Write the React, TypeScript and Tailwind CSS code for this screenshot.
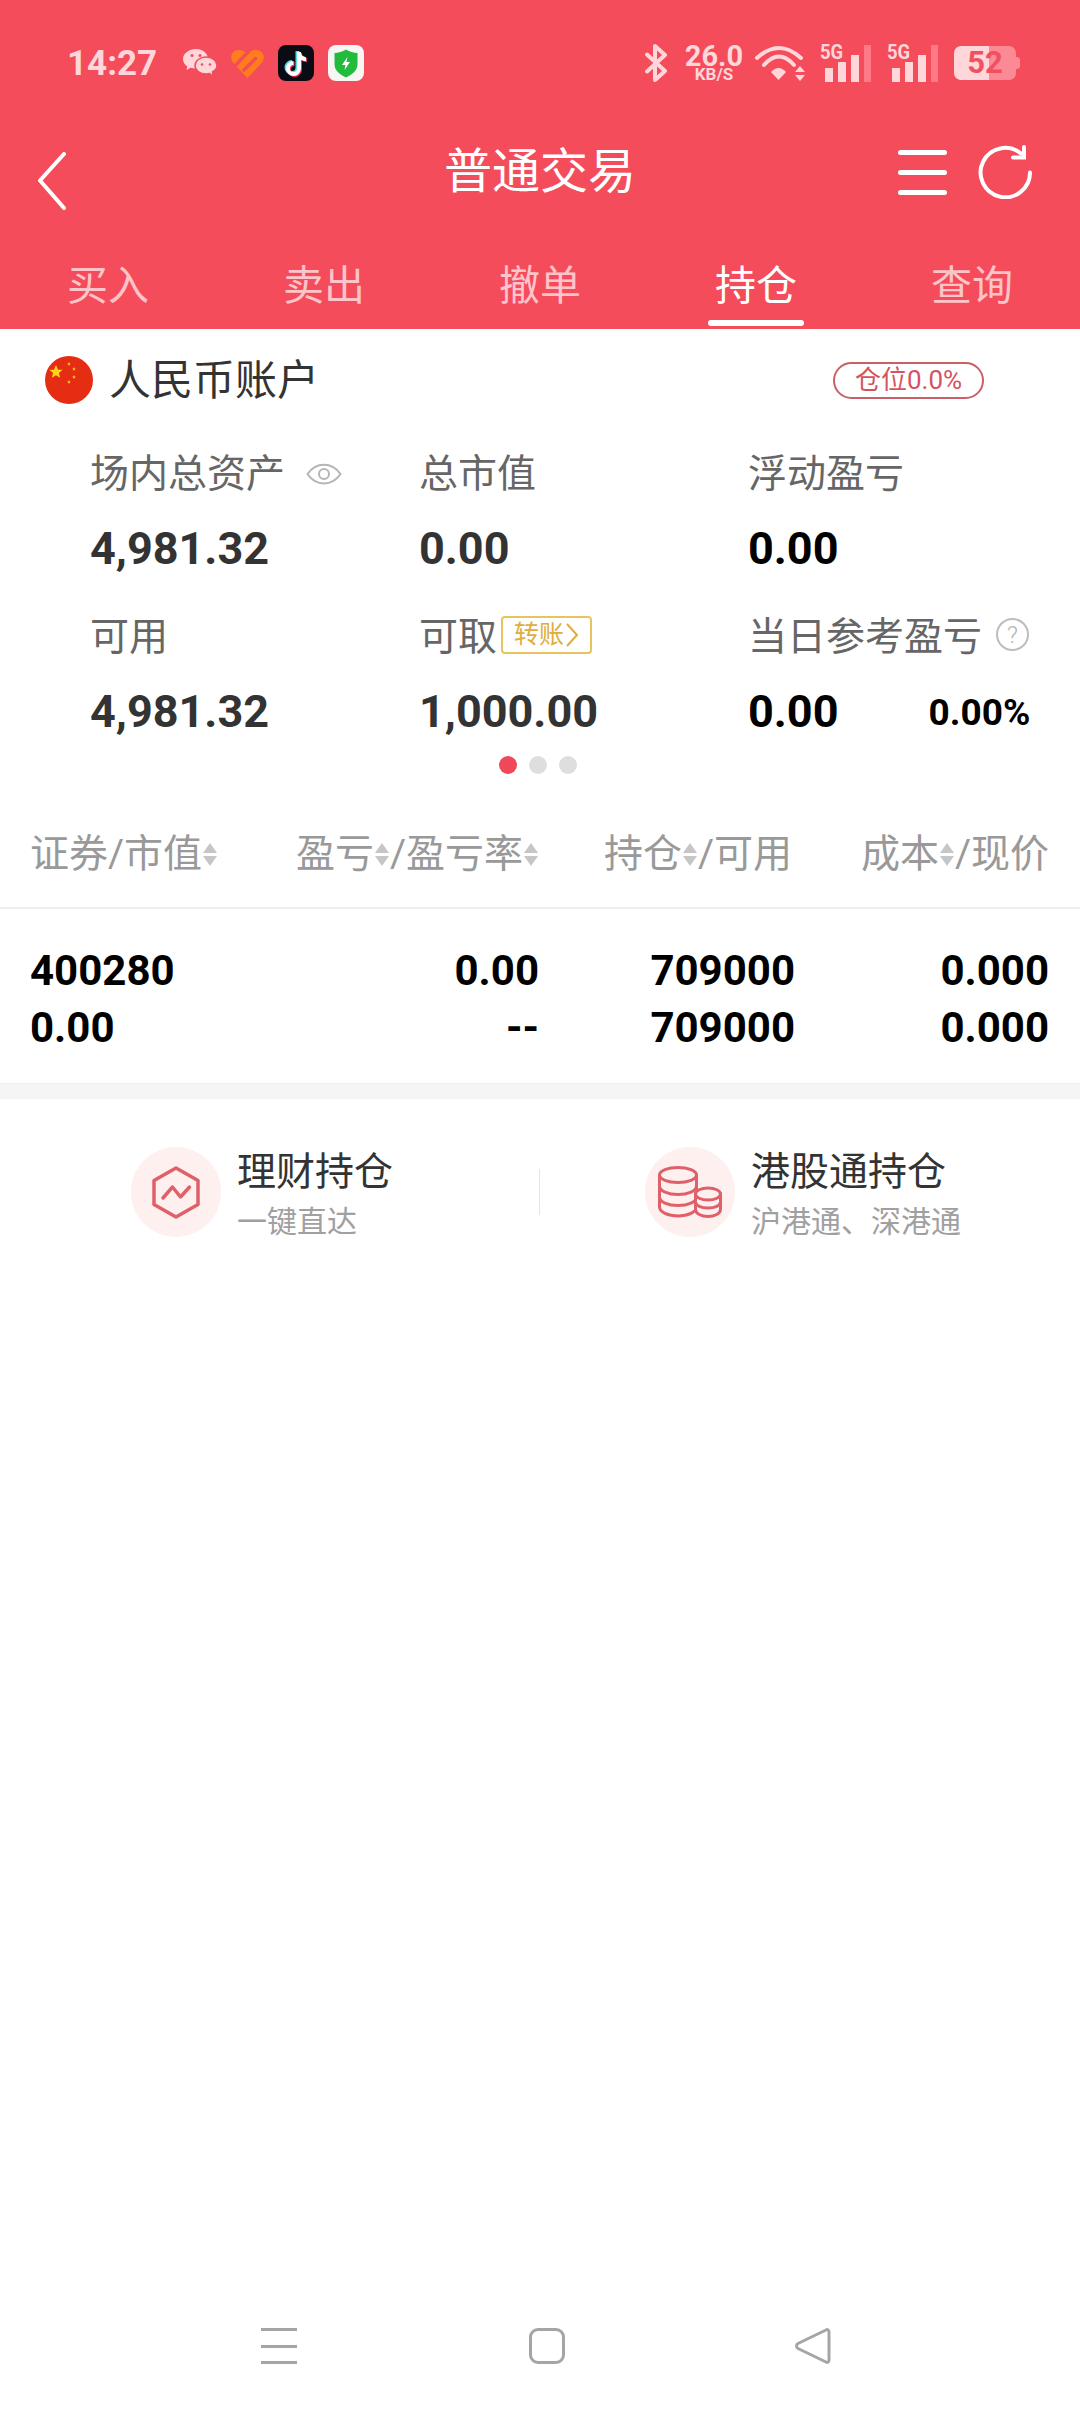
const tabs = ["买入", "卖出", "撤单", "持仓", "查询"];
const pink = "#ffd6da";
const headerRed = "#f44c5b";

function Wechat() {
  return (
    <svg width="34" height="29" viewBox="0 0 34 29">
      <path d="M13 0C6 0 0 4.500 0 10c0 3 1.700 5.600 4.300 7.400L3.500 21l4-2.200c1.500.5 3.500.8 5.500.8 7 0 12-4.300 12-9.600S20 0 13 0z" fill={pink} />
      <path d="M23 8c-6 0-11 3.800-11 8.500S17 25 23 25c1.300 0 2.500-.2 3.700-.5l3.300 3.500-.6-5c2.700-1.500 4.600-3.800 4.600-6.500C34 11.800 29 8 23 8z" fill={pink} stroke={headerRed} strokeWidth="1.500" />
      <circle cx="9" cy="6.500" r="1.500" fill={headerRed} />
      <circle cx="17" cy="6.500" r="1.500" fill={headerRed} />
      <circle cx="19" cy="15.500" r="1.300" fill={headerRed} />
      <circle cx="27" cy="15.500" r="1.300" fill={headerRed} />
    </svg>
  );
}

function HeartLogo() {
  return (
    <svg width="33" height="29" viewBox="0 0 33 29">
      <path d="M16.500 29 2 13.500C-2 8 1 1 8 1c4 0 6.500 2 8.500 4.500C18.500 3 21 1 25 1c7 0 10 7 6 12.500z" fill="#ff7d1c" />
      <path d="M18 2 1 20M24.500 9.500 13 21" fill="none" stroke={headerRed} strokeWidth="3.500" strokeLinecap="round" />
    </svg>
  );
}

function TikTok() {
  const note = "M21 7v16.500a5.500 5.500 0 1 1-5.500-5.500M21 8c.6 3.500 3 6 7 6.300";
  return (
    <svg width="36" height="36" viewBox="0 0 36 36" className="rounded-[8px] bg-[#0b0b16]">
      <path d={note} transform="translate(-1.500 -1)" fill="none" stroke="#4fe3e8" strokeWidth="4" />
      <path d={note} transform="translate(1 1)" fill="none" stroke="#f0305a" strokeWidth="4" />
      <path d={note} fill="none" stroke="#fff" strokeWidth="4" />
    </svg>
  );
}

function Shield() {
  return (
    <svg width="36" height="36" viewBox="0 0 36 36" className="rounded-[8px] bg-[#f6f6f4]">
      <path d="M18 4.500c3.500 2.400 7.500 3.400 11.500 3.500v11c0 6.500-5 10.500-11.500 13.500C11.500 29.500 6.500 25.500 6.500 19V8c4-.1 8-1.100 11.500-3.500z" fill="#22bb3c" />
      <path d="M19.500 12 14 20h3.500l-1 5 5.500-8h-3.500z" fill="#fff" />
    </svg>
  );
}

function Bluetooth() {
  return (
    <svg width="22" height="38" viewBox="0 0 22 38" fill="none" stroke={pink} strokeWidth="4" strokeLinejoin="round" strokeLinecap="round">
      <path d="M2 10.500 20 27 10 36V2l10 9L2 27.500" />
    </svg>
  );
}

function Wifi() {
  return (
    <svg width="52" height="38" viewBox="0 0 52 38" fill="none">
      <path d="M3 14Q25-6 47 14" stroke={pink} strokeWidth="4" strokeLinecap="round" />
      <path d="M10 21Q25 4 40 21" stroke={pink} strokeWidth="4" strokeLinecap="round" />
      <path d="M17 28Q24.500 20 32 28L24.500 36z" fill={pink} />
      <path d="M41 28l5-6 5 6zM41 31l5 6 5-6z" fill={pink} />
    </svg>
  );
}

function Signal() {
  return (
    <div className="relative flex h-[37px] w-[51px] items-end justify-end gap-[5px]">
      <span className="absolute -top-[3px] left-0 origin-left text-[21px] leading-[21px] font-bold text-[#ffd6da] [transform:scaleX(0.88)]">5G</span>
      <div className="h-[14px] w-[8px] bg-[#ffd6da]" />
      <div className="h-[20px] w-[8px] bg-[#ffd6da]" />
      <div className="h-[27px] w-[8px] bg-[#ffd6da]" />
      <div className="h-[37px] w-[7px] bg-[#ff7a86]" />
    </div>
  );
}

function Battery() {
  return (
    <div className="flex items-center">
      <div className="flex h-[34px] w-[62px] items-center justify-center rounded-[7px] bg-[linear-gradient(90deg,#ffd6da_57%,#fb8a95_57%)] text-[31px] leading-[34px] font-bold text-[#f0505f]">
        52
      </div>
      <div className="h-[12px] w-[4px] rounded-r-[3px] bg-[#fb8a95]" />
    </div>
  );
}

function SortArrows() {
  return (
    <svg width="14" height="23" viewBox="0 0 14 23" className="mx-[1px] shrink-0" fill="#c6c6c6">
      <path d="M7 0 14 10H0z" />
      <path d="M0 13h14L7 23z" />
    </svg>
  );
}

function Eye() {
  return (
    <svg width="36" height="22" viewBox="0 0 36 22" fill="none" stroke="#b5b5b5" strokeWidth="2">
      <path d="M1.500 11C10 -1.500 26 -1.500 34.500 11 26 23.500 10 23.500 1.500 11z" />
      <circle cx="18" cy="11" r="5" />
    </svg>
  );
}

function Help() {
  return (
    <div className="-mt-[5px] flex h-[33px] w-[33px] items-center justify-center rounded-full border-2 border-[#bdbdbd] text-[24px] leading-none font-light text-[#b5b5b5]">
      ?
    </div>
  );
}

function Flag() {
  const stars: [number, number, number][] = [
    [11, 16, 7],
    [24, 8, 2],
    [29, 13, 2],
    [29, 21, 2],
    [24, 26, 2],
  ];
  return (
    <svg width="48" height="48" viewBox="0 0 48 48">
      <circle cx="24" cy="24" r="24" fill="#e52d13" />
      {stars.map(([x, y, r]) => (
        <path
          key={x + "-" + y}
          fill="#ffd21e"
          transform={`translate(${x} ${y}) scale(${r / 10})`}
          d="M0-10 2.900-3.100 9.500-3.100 4.200 1.500 5.900 8.100 0 4.500-5.900 8.100-4.200 1.500-9.500-3.100-2.900-3.100z"
        />
      ))}
    </svg>
  );
}

function HexIcon() {
  return (
    <svg width="48" height="53" viewBox="0 0 48 53" fill="none" stroke="#e0606a" strokeWidth="3.500" strokeLinejoin="round">
      <path d="M24 2 46 14.500v24L24 51 2 38.500v-24z" />
      <path d="M11 32l9.500-11 8 10 9-10" strokeLinecap="round" />
    </svg>
  );
}

function CoinsIcon() {
  return (
    <svg width="64" height="52" viewBox="0 0 64 52" fill="none" stroke="#e0606a" strokeWidth="3">
      <ellipse cx="20" cy="9" rx="18.500" ry="7.500" />
      <path d="M1.500 9v32c0 5 8.500 9 18.500 9s18.500-4 18.500-9V9" />
      <path d="M1.500 20c0 5 8.500 8.500 18.500 8.500S38.500 25 38.500 20" />
      <path d="M1.500 31c0 5 8.500 8.500 18.500 8.500S38.500 36 38.500 31" />
      <g fill="#fdf0ef">
        <path d="M37.500 28v15.500c0 4 5.800 7 12.500 7s12.500-3 12.500-7V28z" />
        <ellipse cx="50" cy="28" rx="12.500" ry="6" />
      </g>
      <path d="M37.500 36c0 3.500 5.800 6 12.500 6s12.500-2.500 12.500-6" />
    </svg>
  );
}

function Stat({ label, value, extra, dark }: { label: React.ReactNode; value: string; extra?: React.ReactNode; dark?: boolean }) {
  return (
    <div>
      <div className="flex h-[46px] items-center text-[39px] leading-[46px] text-[#666]">{label}</div>
      <div className={`mt-[26px] flex h-[52px] items-center text-[45px] leading-[52px] font-bold ${dark ? "text-black" : "text-[#333]"}`}>
        <span>{value}</span>
        {extra}
      </div>
    </div>
  );
}

function PositionLink({ title, sub, icon }: { title: string; sub: string; icon: React.ReactNode }) {
  return (
    <div className="flex items-start gap-[16px]">
      <div className="flex h-[90px] w-[90px] items-center justify-center rounded-full bg-[#fdf0ef]">{icon}</div>
      <div className="mt-[2px]">
        <div className="text-[39px] leading-[46px] text-[#333]">{title}</div>
        <div className="mt-[9px] text-[30px] leading-[36px] text-[#a0a0a0]">{sub}</div>
      </div>
    </div>
  );
}

export default function App() {
  return (
    <div className="flex h-[2412px] w-[1080px] flex-col overflow-hidden bg-white font-['Roboto','Noto_Sans_CJK_SC',sans-serif]">
      {/* header */}
      <header className="h-[329px] bg-[#f44c5b]">
        <div className="flex h-[126px] items-center justify-between pr-[60px] pl-[67px]">
          <div className="flex items-center">
            <span className="w-[116px] text-[35px] leading-none font-bold text-[#ffd6da]">14:27</span>
            <div className="flex items-center gap-[14px]">
              <Wechat />
              <HeartLogo />
              <TikTok />
              <Shield />
            </div>
          </div>
          <div className="flex items-center">
            <Bluetooth />
            <div className="ml-[17px] flex w-[60px] flex-col items-center text-[#ffd6da]">
              <span className="text-[29px] leading-[22px] font-bold">26.0</span>
              <span className="text-[17px] leading-[15px] font-bold">KB/S</span>
            </div>
            <div className="ml-[10px]">
              <Wifi />
            </div>
            <div className="ml-[14px]">
              <Signal />
            </div>
            <div className="ml-[16px]">
              <Signal />
            </div>
            <div className="ml-[16px]">
              <Battery />
            </div>
          </div>
        </div>
        <div className="grid h-[92px] grid-cols-[1fr_auto_1fr] items-center px-[37px]">
          <svg width="30" height="58" viewBox="0 0 30 58" className="mt-[18px]" fill="none" stroke="#fff" strokeWidth="4" strokeLinecap="round" strokeLinejoin="round">
            <path d="M27 2 3 28.500 27 56" />
          </svg>
          <div className="text-[48px] leading-[56px] text-white">普通交易</div>
          <div className="flex items-center justify-end gap-[31px] pr-[11px]">
            <div className="flex w-[49px] flex-col gap-[15px]">
              <div className="h-[5px] rounded-full bg-white" />
              <div className="h-[5px] rounded-full bg-white" />
              <div className="h-[5px] rounded-full bg-white" />
            </div>
            <svg width="54" height="54" viewBox="0 0 54 54" fill="none" stroke="#fff" strokeWidth="4" strokeLinecap="round">
              <path d="M52 27.500A24.700 24.700 0 1 1 43 8.500" />
              <path d="M46 2v10.500H35" />
            </svg>
          </div>
        </div>
        <div className="grid h-[111px] grid-cols-5">
          {tabs.map((t, i) => (
            <div key={t} className="flex flex-col items-center pt-[48px]">
              <div className={`text-[41px] leading-[41px] ${i === 3 ? "text-white" : "text-[#ffc4c9]"}`}>{t}</div>
              {i === 3 && <div className="mt-[13px] h-[6px] w-[96px] rounded-full bg-white" />}
            </div>
          ))}
        </div>
      </header>

      {/* account */}
      <div className="mt-[27px] flex h-[48px] items-center justify-between pr-[96px] pl-[45px]">
        <div className="flex items-center gap-[16px]">
          <Flag />
          <span className="pt-[2px] text-[42px] leading-[48px] text-[#333]">人民币账户</span>
        </div>
        <div className="flex h-[37px] w-[151px] items-center justify-center rounded-full border-2 border-[#c96068] text-[26px] leading-none text-[#d4535f]">
          仓位0.0%
        </div>
      </div>

      <div className="mt-[47px] grid grid-cols-[329px_329px_1fr] gap-y-[39px] pl-[90px]">
        <Stat
          label={
            <>
              <span>场内总资产</span>
              <span className="ml-[21px]">
                <Eye />
              </span>
            </>
          }
          value="4,981.32"
        />
        <Stat label="总市值" value="0.00" />
        <Stat label="浮动盈亏" value="0.00" dark />
        <Stat label="可用" value="4,981.32" />
        <Stat
          label={
            <>
              <span>可取</span>
              <span className="-mt-[5px] ml-[4px] flex h-[38px] w-[91px] items-center justify-center gap-[1px] rounded-[4px] border-2 border-[#e8c45e] text-[25px] leading-none text-[#e0ad3a]">
                转账
                <svg width="14" height="26" viewBox="0 0 14 26" fill="none" stroke="#e0ad3a" strokeWidth="2">
                  <path d="M2 2l10 11L2 24" />
                </svg>
              </span>
            </>
          }
          value="1,000.00"
        />
        <Stat
          label={
            <>
              <span>当日参考盈亏</span>
              <span className="ml-[14px]">
                <Help />
              </span>
            </>
          }
          value="0.00"
          dark
          extra={<span className="ml-[90px] text-[37px] leading-none font-bold">0.00%</span>}
        />
      </div>

      <div className="mt-[18px] flex justify-center gap-[12px] pr-[4px]">
        <div className="h-[18px] w-[18px] rounded-full bg-[#f0485a]" />
        <div className="h-[18px] w-[18px] rounded-full bg-[#dedede]" />
        <div className="h-[18px] w-[18px] rounded-full bg-[#dedede]" />
      </div>

      {/* table */}
      <div className="mt-[50px] grid h-[85px] grid-cols-[264px_244px_256px_254px] items-start border-b-2 border-[#eee] px-[31px] text-[39px] leading-[60px] text-[#999]">
        <div className="-ml-[1px] flex h-[60px] items-center">
          证券/市值
          <SortArrows />
        </div>
        <div className="flex h-[60px] items-center justify-end">
          盈亏
          <SortArrows />
          /盈亏率
          <SortArrows />
        </div>
        <div className="flex h-[60px] items-center justify-end pr-[3px]">
          持仓
          <SortArrows />
          /可用
        </div>
        <div className="flex h-[60px] items-center justify-end">
          成本
          <SortArrows />
          /现价
        </div>
      </div>
      <div className="grid grid-cols-[264px_244px_256px_254px] px-[31px] pt-[33px] pb-[27px] text-[42px] leading-[57px] font-bold text-black">
        <div className="-ml-[1px]">
          <div>400280</div>
          <div>0.00</div>
        </div>
        <div className="text-right">
          <div>0.00</div>
          <div>--</div>
        </div>
        <div className="text-right">
          <div>709000</div>
          <div>709000</div>
        </div>
        <div className="text-right">
          <div>0.000</div>
          <div>0.000</div>
        </div>
      </div>
      <div className="h-[16px] border-t border-[#eee] bg-[#f5f5f5]" />

      {/* shortcuts */}
      <div className="mt-[48px] grid grid-cols-2 items-center">
        <div className="relative pl-[131px]">
          <PositionLink title="理财持仓" sub="一键直达" icon={<HexIcon />} />
          <div className="absolute top-[22px] right-0 h-[46px] w-[1px] bg-[#e3e3e3]" />
        </div>
        <div className="pl-[105px]">
          <PositionLink title="港股通持仓" sub="沪港通、深港通" icon={<CoinsIcon />} />
        </div>
      </div>

      {/* system nav */}
      <div className="mt-auto mb-[48px] flex items-center pl-[261px]">
        <div className="flex h-[36px] w-[36px] flex-col justify-between">
          <div className="h-[3px] bg-[#a5a5a5]" />
          <div className="h-[3px] bg-[#a5a5a5]" />
          <div className="h-[3px] bg-[#a5a5a5]" />
        </div>
        <div className="ml-[232px] h-[36px] w-[36px] rounded-[9px] border-[3px] border-[#a5a5a5]" />
        <svg width="36" height="36" viewBox="0 0 36 36" className="ml-[230px]" fill="none" stroke="#a5a5a5" strokeWidth="3" strokeLinejoin="round">
          <path d="M34 4c0-2-1.500-3-3-2L3 15.500c-2 1.200-2 3.800 0 5L31 34c1.500 1 3 0 3-2z" />
        </svg>
      </div>
    </div>
  );
}
